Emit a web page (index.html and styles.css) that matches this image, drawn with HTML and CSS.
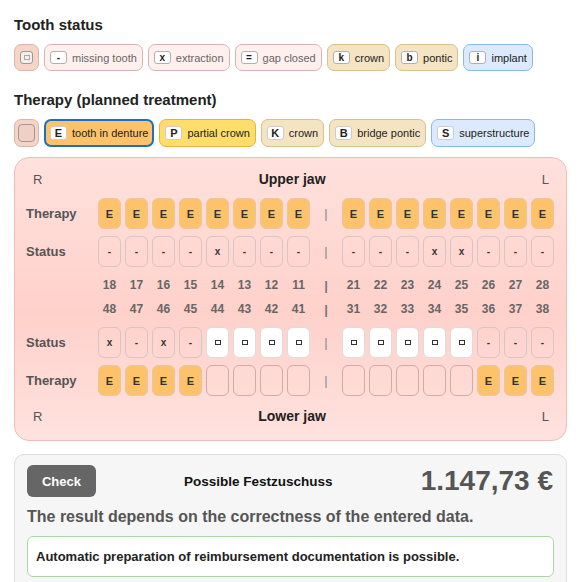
FILE: index.html
```html
<!DOCTYPE html>
<html lang="en">

<head>
    <meta charset="UTF-8">
    <meta name="viewport" content="width=device-width, initial-scale=1.0">
    <title>Festzuschuss</title>
    <link rel="stylesheet" href="styles.css">
</head>

<body>

    <h3>Tooth status</h3>
    <div class="chips">
        <span class="chip blank"><span class="key"><span class="sq"></span></span></span>
        <span class="chip pale"><span class="key">-</span>missing tooth</span>
        <span class="chip pale"><span class="key">x</span>extraction</span>
        <span class="chip pale"><span class="key">=</span>gap closed</span>
        <span class="chip beige"><span class="key">k</span>crown</span>
        <span class="chip beige"><span class="key">b</span>pontic</span>
        <span class="chip blue"><span class="key">i</span>implant</span>
    </div>

    <h3 class="second">Therapy (planned treatment)</h3>
    <div class="chips therapy-chips">
        <span class="chip blank2"><span class="box"></span></span>
        <span class="chip orange active"><span class="key">E</span>tooth in denture</span>
        <span class="chip yellow"><span class="key">P</span>partial crown</span>
        <span class="chip beige"><span class="key">K</span>crown</span>
        <span class="chip beige"><span class="key">B</span>bridge pontic</span>
        <span class="chip blue"><span class="key">S</span>superstructure</span>
    </div>

    <div class="jaw">
        <div class="jaw-head">
            <span>R</span><b>Upper jaw</b><span>L</span>
        </div>

        <div class="row first">
            <span class="label">Therapy</span>
            <div class="group">
                <span class="cell e">E</span><span class="cell e">E</span><span class="cell e">E</span><span class="cell e">E</span>
                <span class="cell e">E</span><span class="cell e">E</span><span class="cell e">E</span><span class="cell e">E</span>
            </div>
            <span class="sep">|</span>
            <div class="group">
                <span class="cell e">E</span><span class="cell e">E</span><span class="cell e">E</span><span class="cell e">E</span>
                <span class="cell e">E</span><span class="cell e">E</span><span class="cell e">E</span><span class="cell e">E</span>
            </div>
        </div>

        <div class="row">
            <span class="label">Status</span>
            <div class="group">
                <span class="cell st">-</span><span class="cell st">-</span><span class="cell st">-</span><span class="cell st">-</span>
                <span class="cell st">x</span><span class="cell st">-</span><span class="cell st">-</span><span class="cell st">-</span>
            </div>
            <span class="sep">|</span>
            <div class="group">
                <span class="cell st">-</span><span class="cell st">-</span><span class="cell st">-</span><span class="cell st">x</span>
                <span class="cell st">x</span><span class="cell st">-</span><span class="cell st">-</span><span class="cell st">-</span>
            </div>
        </div>

        <div class="row nums top-nums">
            <span class="label"></span>
            <div class="group">
                <span>18</span><span>17</span><span>16</span><span>15</span><span>14</span><span>13</span><span>12</span><span>11</span>
            </div>
            <span class="sep">|</span>
            <div class="group">
                <span>21</span><span>22</span><span>23</span><span>24</span><span>25</span><span>26</span><span>27</span><span>28</span>
            </div>
        </div>

        <div class="row nums">
            <span class="label"></span>
            <div class="group">
                <span>48</span><span>47</span><span>46</span><span>45</span><span>44</span><span>43</span><span>42</span><span>41</span>
            </div>
            <span class="sep">|</span>
            <div class="group">
                <span>31</span><span>32</span><span>33</span><span>34</span><span>35</span><span>36</span><span>37</span><span>38</span>
            </div>
        </div>

        <div class="row after-nums">
            <span class="label">Status</span>
            <div class="group">
                <span class="cell st">x</span><span class="cell st">-</span><span class="cell st">x</span><span class="cell st">-</span>
                <span class="cell w"><i class="sq"></i></span><span class="cell w"><i class="sq"></i></span><span class="cell w"><i class="sq"></i></span><span class="cell w"><i class="sq"></i></span>
            </div>
            <span class="sep">|</span>
            <div class="group">
                <span class="cell w"><i class="sq"></i></span><span class="cell w"><i class="sq"></i></span><span class="cell w"><i class="sq"></i></span><span class="cell w"><i class="sq"></i></span>
                <span class="cell w"><i class="sq"></i></span><span class="cell st">-</span><span class="cell st">-</span><span class="cell st">-</span>
            </div>
        </div>

        <div class="row">
            <span class="label">Therapy</span>
            <div class="group">
                <span class="cell e">E</span><span class="cell e">E</span><span class="cell e">E</span><span class="cell e">E</span>
                <span class="cell empty"></span><span class="cell empty"></span><span class="cell empty"></span><span class="cell empty"></span>
            </div>
            <span class="sep">|</span>
            <div class="group">
                <span class="cell empty"></span><span class="cell empty"></span><span class="cell empty"></span><span class="cell empty"></span>
                <span class="cell empty"></span><span class="cell e">E</span><span class="cell e">E</span><span class="cell e">E</span>
            </div>
        </div>

        <div class="jaw-head bottom">
            <span>R</span><b>Lower jaw</b><span>L</span>
        </div>
    </div>

    <div class="result">
        <div class="result-top">
            <button class="check">Check</button>
            <span class="title">Possible Festzuschuss</span>
            <span class="amount">1.147,73 €</span>
        </div>
        <p class="note">The result depends on the correctness of the entered data.</p>
        <div class="ok">Automatic preparation of reimbursement documentation is possible.</div>
    </div>

</body>

</html>
```

FILE: styles.css
```css
*{
    margin: 0;
    box-sizing: border-box;
}
body{
    padding: 16px 16px 0 14px;
    font-family: "Liberation Sans", Arial, sans-serif;
    color: #222;
}
h3{
    font-size: 15px;
    line-height: 18px;
    color: #222;
}
h3.second{
    margin-top: 20px;
}
.chips{
    display: flex;
    gap: 5px;
    margin-top: 10px;
}
.chip{
    display: flex;
    align-items: center;
    gap: 5px;
    height: 27px;
    padding: 0 5px;
    border: 1px solid #d8b4b4;
    border-radius: 7px;
    font-size: 11px;
    color: #222;
    white-space: nowrap;
}
.therapy-chips .chip{
    height: 28px;
}
.key{
    display: inline-flex;
    align-items: center;
    justify-content: center;
    width: 17px;
    height: 13px;
    background: #fff;
    border: 1px solid #b0b0b0;
    border-radius: 3px;
    font-size: 10px;
    font-weight: bold;
    color: #222;
}
.therapy-chips .key{
    height: 14px;
    border-color: #ccc;
    font-size: 11px;
}
.sq{
    display: inline-block;
    width: 6px;
    height: 5px;
    border: 1px solid #333;
}
.blank{
    width: 25px;
    padding: 0 5px;
    background: #f5d5c8;
    border-color: #dcb6aa;
}
.blank .key{
    width: 14px;
    background: #f6eeeb;
    border-color: #999;
}
.blank .sq{
    border-color: #aaa;
}
.blank2{
    width: 25px;
    padding: 0 3px;
    background: #f3d4c9;
    border-color: #d9b6aa;
}
.box{
    width: 18px;
    height: 18px;
    border: 1px solid #a89490;
    border-radius: 4px;
    background: #f0d0c5;
}
.pale{
    background: #fff0ee;
    color: #666;
}
.beige{
    background: #f5e4c2;
    border-color: #d9c08f;
}
.blue{
    background: #dbeafc;
    border-color: #8ab8ec;
}
.orange{
    background: #fec36a;
}
.active{
    border: 2px solid #1c6fc1;
    padding: 0 4px;
}
.yellow{
    background: #fedd6b;
    border-color: #e6b43d;
}

/* jaw chart */
.jaw{
    margin-top: 10px;
    width: 553px;
    padding: 10px 10px 13px;
    border: 1px solid #f0bcb8;
    border-radius: 15px;
    background: linear-gradient(#ffe1dd, #ffd1cb 55%, #ffe2de);
}
.jaw-head{
    display: flex;
    justify-content: space-between;
    align-items: center;
    height: 22px;
    padding: 0 7px 0 8px;
    font-size: 13px;
    color: #555;
}
.jaw-head b{
    font-size: 14px;
    color: #222;
}
.jaw-head.bottom{
    margin-top: 9px;
}
.row{
    display: flex;
    align-items: center;
    height: 31px;
    margin-top: 7px;
}
.row.first{
    margin-top: 8px;
}
.label{
    width: 73px;
    padding-left: 1px;
    font-size: 13px;
    font-weight: bold;
    color: #555;
}
.group{
    display: flex;
    gap: 4px;
}
.sep{
    width: 32px;
    text-align: center;
    font-size: 13px;
    color: #888;
}
.cell{
    display: flex;
    align-items: center;
    justify-content: center;
    width: 23px;
    height: 31px;
    border: 1px solid #d6c5c3;
    border-radius: 6px;
    font-size: 10px;
    font-weight: bold;
    color: #333;
}
.cell.e{
    background: #fec36a;
    border-color: #e6c7a4;
    font-size: 11px;
}
.cell.w{
    background: #fff;
    border-color: #dcdcdc;
}
.cell.empty{
    border-color: #d3aaa6;
}
.nums{
    height: 24px;
    margin-top: 0;
}
.top-nums{
    margin-top: 6px;
}
.nums .group span{
    width: 23px;
    text-align: center;
    font-size: 12px;
    font-weight: bold;
    color: #666;
}
.nums .sep{
    font-weight: bold;
    color: #777;
}
.row.after-nums{
    margin-top: 6px;
}

/* result */
.result{
    margin-top: 13px;
    width: 553px;
    padding: 10px 12px 20px;
    background: #f6f6f6;
    border: 1px solid #ddd;
    border-radius: 10px;
}
.result-top{
    display: flex;
    align-items: center;
}
.check{
    width: 69px;
    height: 32px;
    border: none;
    border-radius: 6px;
    background: #666;
    color: #fff;
    font-family: inherit;
    font-size: 13px;
    font-weight: bold;
}
.title{
    flex: 1;
    text-align: center;
    font-size: 13.5px;
    font-weight: bold;
    color: #111;
}
.amount{
    font-size: 28px;
    font-weight: bold;
    color: #555;
    padding-right: 1px;
}
.note{
    margin-top: 11px;
    font-size: 16px;
    font-weight: bold;
    color: #555;
}
.ok{
    margin-top: 10px;
    height: 41px;
    display: flex;
    align-items: center;
    padding-left: 8px;
    background: #fff;
    border: 1px solid #a8d9a2;
    border-radius: 6px;
    font-size: 13px;
    font-weight: bold;
    color: #222;
}
```
